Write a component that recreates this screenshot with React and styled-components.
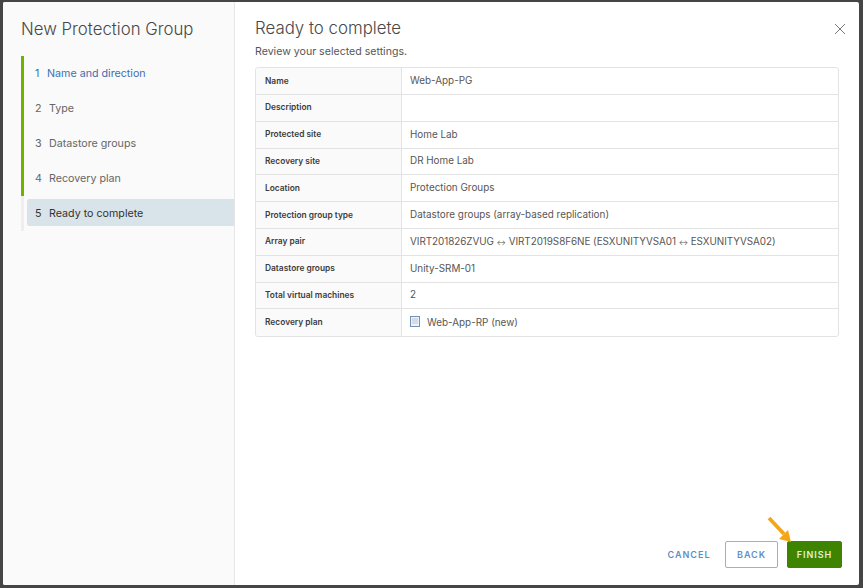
import React from "react";
import styled, { createGlobalStyle } from "styled-components";

const GlobalStyle = createGlobalStyle`
  html, body {
    margin: 0;
    padding: 0;
    height: 100%;
    background: #454545;
    overflow: hidden;
  }
  #root {
    height: 100%;
  }
`;

const Backdrop = styled.div`
  box-sizing: border-box;
  width: 863px;
  height: 588px;
  padding: 2px 4px 3px 3px;
  background: #454545;
  font-family: Inter, "Open Sans", sans-serif;
`;

const Dialog = styled.div`
  position: relative;
  display: flex;
  height: 100%;
  background: #fff;
  border-radius: 2px;
  overflow: hidden;
`;

const Sidebar = styled.aside`
  box-sizing: border-box;
  width: 232px;
  flex: none;
  padding: 17px 0 0 18px;
  background: #fafafa;
  border-right: 1px solid #e6e6e6;
`;

const DialogTitle = styled.h1`
  margin: 0 0 17px;
  font-size: 16.8px;
  line-height: 20px;
  font-weight: 300;
  color: #484848;
`;

const Steps = styled.ol`
  list-style: none;
  margin: 0;
  padding: 0;
`;

const Step = styled.li`
  box-sizing: border-box;
  height: 35px;
  padding: 3px 0 5px 3px;
  border-left: 3px solid ${(p) => (p.$done ? "#6db400" : "#eeeeee")};
`;

const StepLabel = styled.div`
  box-sizing: border-box;
  display: flex;
  align-items: center;
  height: 27px;
  padding: 2px 0 0 8px;
  font-size: 10.7px;
  border-radius: 2px 0 0 2px;
  background: ${(p) => (p.$active ? "#d9e4ea" : "transparent")};
  color: ${(p) => (p.$link ? "#3f6fb0" : p.$active ? "#333333" : "#666666")};
`;

const StepNum = styled.span`
  width: ${(p) => (p.$link ? "12px" : "14px")};
  flex: none;
`;

const Main = styled.main`
  flex: 1;
  display: flex;
  flex-direction: column;
  min-width: 0;
  padding: 16px 20px 17px 20px;
`;

const Heading = styled.h2`
  margin: 0;
  font-size: 16.85px;
  line-height: 20px;
  font-weight: 300;
  color: #484848;
`;

const Intro = styled.p`
  margin: 7px 0 8px;
  font-size: 10.6px;
  line-height: 14px;
  color: #565656;
`;

const Table = styled.div`
  border: 1px solid #e3e3e3;
  border-radius: 3px;
  overflow: hidden;
`;

const Row = styled.div`
  display: grid;
  grid-template-columns: 146px 1fr;
  box-sizing: border-box;
  border-top: ${(p) => (p.$first ? "0" : "1px solid #e3e3e3")};
  height: ${(p) => (p.$first ? "26px" : "26.8px")};
  &:last-child {
    height: 27.6px;
  }
`;

const LabelCell = styled.div`
  display: flex;
  align-items: center;
  padding: 0 0 1px 9px;
  background: #fafafa;
  border-right: 1px solid #e3e3e3;
  font-size: 8.4px;
  font-weight: 600;
  color: #3c3c3c;
`;

const ValueCell = styled.div`
  display: flex;
  align-items: center;
  gap: 7px;
  padding: 0 0 2px 8px;
  font-size: 9.9px;
  color: #565656;
  white-space: pre;
`;

const PairText = styled.span`
  letter-spacing: -0.045px;
`;

const PairArrow = styled.span`
  font-size: 7px;
`;

const Footer = styled.div`
  display: flex;
  justify-content: flex-end;
  align-items: center;
  gap: 9px;
  margin-top: auto;
  margin-right: -3px;
`;

const Button = styled.button`
  box-sizing: border-box;
  height: 27px;
  padding: 0;
  font-family: inherit;
  font-size: 9px;
  font-weight: 600;
  letter-spacing: 1px;
  border-radius: 2px;
  width: ${(p) => p.$w}px;
  color: ${(p) => (p.$primary ? "#e4eed8" : "#5c90c8")};
  background: ${(p) => (p.$primary ? "#3f8400" : "#fff")};
  border: 1px solid
    ${(p) => (p.$primary ? "#3f8400" : p.$ghost ? "transparent" : "#8fb3d9")};
`;

const CloseButton = styled.button`
  position: absolute;
  top: 21px;
  right: 13px;
  width: 12px;
  height: 12px;
  padding: 0;
  border: 0;
  background: none;
  line-height: 0;
`;

const Arrow = styled.svg`
  position: absolute;
  left: 763px;
  bottom: 43px;
  width: 27px;
  height: 27px;
`;

const rows = [
  ["Name", "Web-App-PG"],
  ["Description", ""],
  ["Protected site", "Home Lab"],
  ["Recovery site", "DR Home Lab"],
  ["Location", "Protection Groups"],
  ["Protection group type", "Datastore groups (array-based replication)"],
  [
    "Array pair",
    <PairText>
      VIRT201826ZVUG <PairArrow>↔</PairArrow> VIRT2019S8F6NE (ESXUNITYVSA01 <PairArrow>↔</PairArrow> ESXUNITYVSA02)
    </PairText>,
  ],
  ["Datastore groups", "Unity-SRM-01"],
  ["Total virtual machines", "2"],
];

const steps = ["Name and direction", "Type", "Datastore groups", "Recovery plan", "Ready to complete"];

const PlanIcon = () => (
  <svg width="10" height="11" viewBox="0 0 10 11">
    <rect x="0.5" y="0.5" width="9" height="10" fill="#eef2f7" stroke="#7391b5" />
    <path d="M2 3h6M2 5h6M2 7h6" stroke="#b6c6d8" strokeWidth="1" />
  </svg>
);

const App = () => {
  return (
    <Backdrop>
      <GlobalStyle />
      <Dialog>
        <Sidebar>
          <DialogTitle>New Protection Group</DialogTitle>
          <Steps>
            {steps.map((s, i) => (
              <Step key={s} $done={i < 4}>
                <StepLabel $link={i === 0} $active={i === 4}>
                  <StepNum $link={i === 0}>{i + 1}</StepNum>
                  {s}
                </StepLabel>
              </Step>
            ))}
          </Steps>
        </Sidebar>
        <Main>
          <Heading>Ready to complete</Heading>
          <Intro>Review your selected settings.</Intro>
          <Table>
            {rows.map(([label, value], i) => (
              <Row key={label} $first={i === 0}>
                <LabelCell>{label}</LabelCell>
                <ValueCell>{value}</ValueCell>
              </Row>
            ))}
            <Row>
              <LabelCell>Recovery plan</LabelCell>
              <ValueCell>
                <PlanIcon />
                Web-App-RP (new)
              </ValueCell>
            </Row>
          </Table>
          <Footer>
            <Button $ghost $w={54}>CANCEL</Button>
            <Button $w={53}>BACK</Button>
            <Button $primary $w={55}>FINISH</Button>
          </Footer>
        </Main>
        <CloseButton aria-label="Close">
          <svg width="12" height="12" viewBox="0 0 12 12">
            <path d="M1 1l10 10M11 1L1 11" stroke="#7a7a7a" strokeWidth="1" fill="none" />
          </svg>
        </CloseButton>
        <Arrow viewBox="0 0 27 27">
          <path d="M3 3L18 19" stroke="#f2a71b" strokeWidth="3.8" fill="none" />
          <path d="M25 27L13 24L22 15Z" fill="#f2a71b" />
        </Arrow>
      </Dialog>
    </Backdrop>
  );
};

export default App;
